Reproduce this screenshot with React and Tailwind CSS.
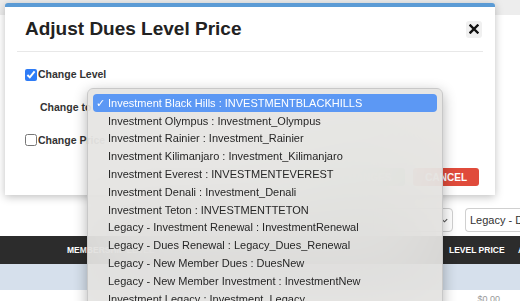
import React from 'react';

const options = [
  'Investment Olympus : Investment_Olympus',
  'Investment Rainier : Investment_Rainier',
  'Investment Kilimanjaro : Investment_Kilimanjaro',
  'Investment Everest : INVESTMENTEVEREST',
  'Investment Denali : Investment_Denali',
  'Investment Teton : INVESTMENTTETON',
  'Legacy - Investment Renewal : InvestmentRenewal',
  'Legacy - Dues Renewal : Legacy_Dues_Renewal',
  'Legacy - New Member Dues : DuesNew',
  'Legacy - New Member Investment : InvestmentNew',
  'Investment Legacy : Investment_Legacy',
];

const App = () => {
  return (
    <div className="relative w-[520px] h-[301px] overflow-hidden bg-white font-['Liberation_Sans',Arial,sans-serif] text-[#333]">
      {/* page behind the modal */}
      <div className="h-[15px] bg-[#ededed]" />
      <div className="h-[193px]" />
      <div className="flex h-[24px] items-center justify-end gap-[12px]">
        <div className="flex h-[24px] w-[80px] items-center justify-end rounded border border-[#d0d0d0] pr-[3px]">
          <svg width="9" height="9" viewBox="0 0 10 10" fill="none" stroke="#555" strokeWidth="1.2">
            <path d="M2 3.5l3 3 3-3" />
          </svg>
        </div>
        <div className="flex h-[24px] w-[55px] items-center overflow-hidden whitespace-nowrap rounded-l border border-r-0 border-[#d0d0d0] pl-[4px] text-[11px]">
          Legacy - Dues Renewal
        </div>
      </div>
      <div className="mt-[4px] flex h-[28px] items-center overflow-hidden whitespace-nowrap bg-[#2c2c2c] text-[8.5px] font-bold text-white">
        <span className="w-[449px] shrink-0 pl-[67px]">MEMBERSHIP LEVEL</span>
        <span className="w-[69px] shrink-0">LEVEL PRICE</span>
        <span className="shrink-0">ACTIONS</span>
      </div>
      <div className="h-[26px] bg-[#d6e0ec]" />
      <div className="flex h-[20px] items-center justify-end pr-[20px] text-[9px] text-[#999]">
        $0.00
      </div>

      {/* modal */}
      <div className="absolute left-[5px] top-[3px] h-[192px] w-[490px] rounded-t-[3px] border-t-[4px] border-[#5b9bd5] bg-white shadow-[0_2px_8px_rgba(0,0,0,0.25)]">
        <div className="mx-[12px] flex h-[45px] items-center justify-between border-b border-[#e8e8e8] pl-[8px] pr-[1px]">
          <h1 className="text-[19px] font-bold text-[#222]">Adjust Dues Level Price</h1>
          <button className="flex h-[17px] w-[16px] items-center justify-center rounded-[3px] bg-[#f0f0f0]">
            <svg width="10" height="10" viewBox="0 0 10 10" stroke="#111" strokeWidth="2.4" strokeLinecap="square">
              <path d="M1.5 1.5l7 7M8.5 1.5l-7 7" />
            </svg>
          </button>
        </div>
        <div className="px-[20px] pt-[15px]">
          <label className="flex items-center gap-[1px] text-[10.5px] font-bold text-[#333]">
            <input type="checkbox" defaultChecked className="m-0 h-[12px] w-[12px] accent-[#2f7cf6]" />
            Change Level
          </label>
          <div className="mt-[17px] flex items-center pl-[15px] text-[10.5px] font-bold">
            <span>Change to</span>
          </div>
          <label className="mt-[17px] flex items-center gap-[1px] text-[10.5px] font-bold text-[#333]">
            <input type="checkbox" className="m-0 h-[12px] w-[12px]" />
            Change Price
          </label>
        </div>
        <div className="mt-[20px] flex justify-end gap-[8px] pr-[16px]">
          <button className="h-[18px] rounded-[3px] bg-[#3cb067] px-[14px] text-[10px] font-bold text-white">SAVE CHANGES</button>
          <button className="h-[18px] rounded-[3px] bg-[#e04b3b] px-[12px] text-[10px] font-bold text-white">CANCEL</button>
        </div>
      </div>

      {/* native dropdown menu */}
      <div className="absolute left-[87px] top-[88px] h-[240px] w-[356px] rounded-[6px] border border-[#c8c8c8] bg-[#e4e3e1]/90 pt-[5px] shadow-[0_4px_14px_rgba(0,0,0,0.3)] backdrop-blur-2xl">
        <div className="mx-[5px] flex h-[18px] items-center rounded-[4px] bg-[#5c98f4] pl-[3px] text-[11px] text-white">
          <span className="w-[12px] text-[11px]">✓</span>
          <span>Investment Black Hills : INVESTMENTBLACKHILLS</span>
        </div>
        {options.map((o) => (
          <div key={o} className="flex h-[17.8px] items-center whitespace-nowrap pl-[20px] text-[11px] text-[#262626]">
            {o}
          </div>
        ))}
      </div>
    </div>
  );
};

export default App;
